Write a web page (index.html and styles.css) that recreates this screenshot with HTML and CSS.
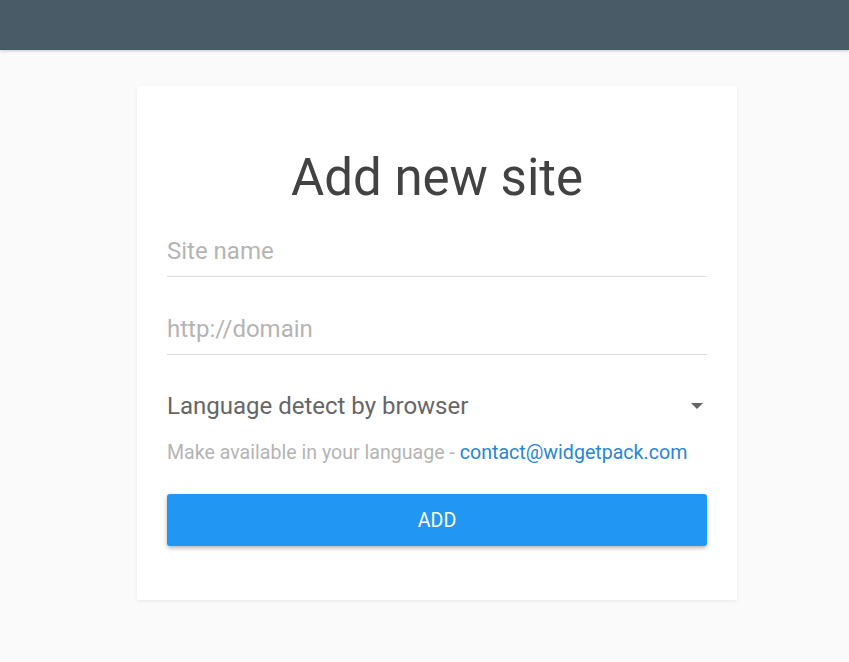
FILE: index.html
```html
<!DOCTYPE html>
<html>
<head>
<meta charset="utf-8">
<link rel="stylesheet" href="styles.css">
</head>
<body>
<header class="topbar"></header>
<main class="page">
  <section class="card">
    <h1 class="title">Add new site</h1>
    <div class="field"><input class="input" type="text" placeholder="Site name"></div>
    <div class="field"><input class="input" type="text" placeholder="http://domain"></div>
    <div class="select">
      <span class="select-label">Language detect by browser</span>
      <span class="caret"></span>
    </div>
    <p class="hint">Make available in your language - <a class="link" href="#">contact@widgetpack.com</a></p>
    <button class="btn">ADD</button>
  </section>
</main>
</body>
</html>
```
FILE: styles.css
```css
* { box-sizing: border-box; }
html, body { margin: 0; padding: 0; }
body {
  background: #fafafa;
  font-family: Roboto, "Liberation Sans", sans-serif;
  height: 662px;
  overflow: hidden;
}
.topbar {
  height: 50px;
  background: #485b66;
  box-shadow: 0 1px 3px rgba(0,0,0,0.2);
}
.page {
  display: flex;
  justify-content: center;
  padding-top: 36px;
  padding-left: 25px;
}
.card {
  width: 600px;
  background: #fff;
  padding: 64px 30px 54px;
  box-shadow: 0 1px 3px rgba(0,0,0,0.08);
}
.title {
  margin: 0 0 20px;
  text-align: center;
  font-weight: 400;
  font-size: 51px;
  line-height: 56px;
  color: #424242;
}
.field + .field {
  margin-top: 27px;
}
.input {
  display: block;
  width: 100%;
  border: 0;
  border-bottom: 1px solid #dcdcdc;
  background: transparent;
  font-family: inherit;
  font-size: 24px;
  height: 51px;
  padding: 0;
  color: #444;
  outline: none;
}
.input::placeholder { color: #b4b4b4; }
.select {
  display: flex;
  align-items: center;
  justify-content: space-between;
  height: 40px;
  margin-top: 31px;
}
.select-label {
  font-size: 24px;
  color: #666;
}
.caret {
  width: 0; height: 0;
  border-left: 6px solid transparent;
  border-right: 6px solid transparent;
  border-top: 6px solid #666;
  margin-right: 4px;
}
.hint {
  margin: 15px 0 0;
  font-size: 19.6px;
  line-height: 24px;
  color: #b4b4b4;
}
.link { color: #2a85d5; text-decoration: none; }
.btn {
  display: block;
  width: 100%;
  height: 52px;
  margin-top: 29px;
  border: 0;
  border-radius: 3px;
  background: #2196f3;
  color: #fff;
  font-family: inherit;
  font-size: 19.6px;
  box-shadow: 0 2px 4px rgba(0,0,0,0.3);
}
```
